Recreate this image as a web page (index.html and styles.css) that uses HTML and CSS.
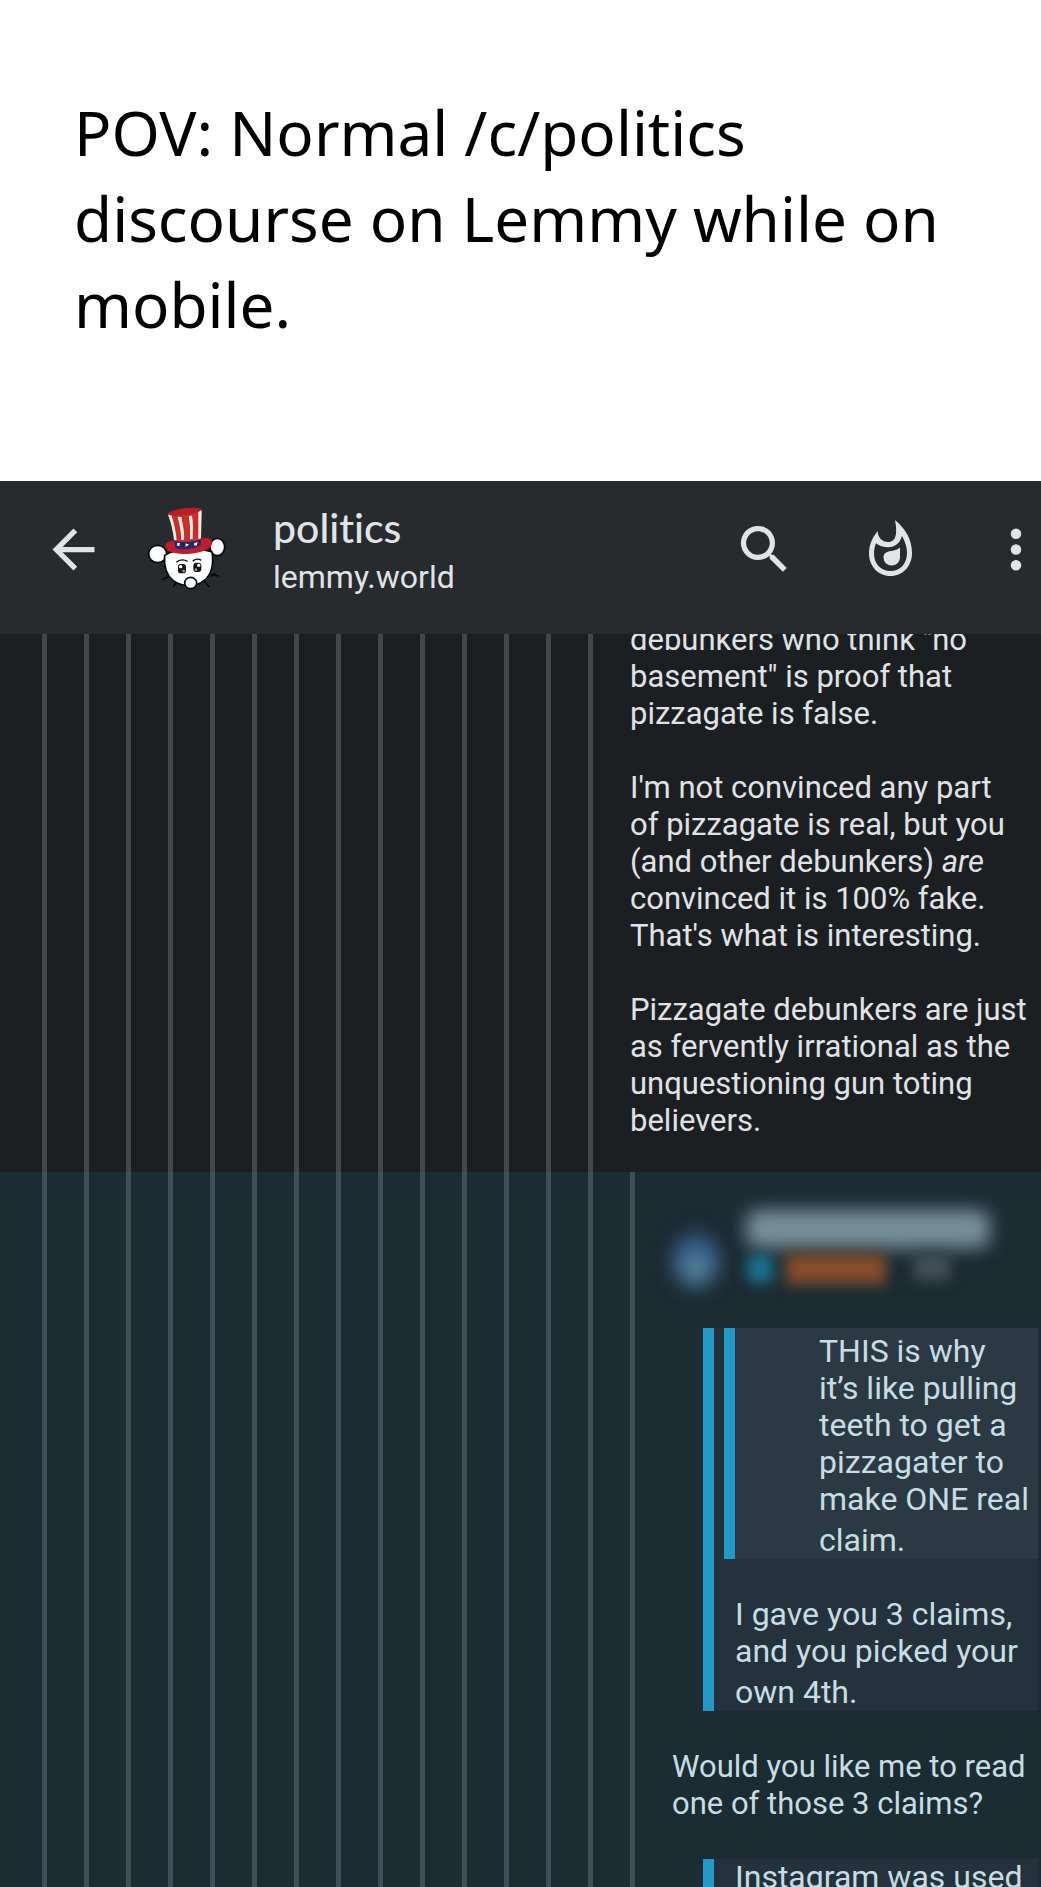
FILE: index.html
```html
<!DOCTYPE html>
<html lang="en">

<head>
	<meta charset="UTF-8">
	<meta name="viewport" content="width=device-width, initial-scale=1.0">
	<title>politics - lemmy.world</title>
	<link rel="stylesheet" href="styles.css">
</head>

<body>
	<!-- caption -->
	<h1 class="caption">POV: Normal /c/politics<br>discourse on Lemmy while on<br>mobile.</h1>

	<!-- app bar -->
	<header class="bar">
		<button class="icon-btn" type="button" aria-label="Back">
			<svg class="icon" viewBox="0 0 24 24"><path d="M20 11H7.83l5.59-5.59L12 4l-8 8 8 8 1.41-1.41L7.83 13H20z"/></svg>
		</button>
		<svg class="avatar" viewBox="0 20 285 285" aria-hidden="true">
			<!-- whiskers -->
			<path d="M88 243l-22 10M110 260l-10 15M192 255l15 20M208 236l30 6M214 244l10-10" fill="none" stroke="#08090a" stroke-width="5"/>
			<!-- ears -->
			<ellipse cx="53" cy="176" rx="27" ry="26" fill="#fff" stroke="#08090a" stroke-width="5"/>
			<ellipse cx="232" cy="155" rx="22" ry="26" fill="#fff" stroke="#08090a" stroke-width="5"/>
			<!-- head -->
			<path d="M74 180c-3 34 4 58 26 76 26 20 68 20 92 0 22-18 30-48 24-86-40-14-104-14-142 10z" fill="#fff" stroke="#08090a" stroke-width="5"/>
			<!-- hat -->
			<path d="M76 151c2-12 18-16 34-15l72-5c18-6 34-2 34 12 0 18-34 31-72 33-36 1-68-7-68-25z" fill="#c01c2c"/>
			<path d="M84 55c10-11 84-24 100-12l-2 92c-22 10-58 12-78 4-2-30-10-58-20-84z" fill="#c5302c"/>
			<path d="M84 58l9-3c8 26 15 50 17 80l-8-1c-3-28-8-50-18-76zM113 64l11 1c4 24 10 42 8 68l-8 1c0-24-5-46-11-70zM146 62l10-1c4 22 3 46 2 70l-8 1c1-24 1-46-4-70zM175 48l10-3-2 84-8 3z" fill="#fbeee0"/>
			<path d="M84 54c14-12 84-24 100-11-10 14-76 22-98 15z" fill="#b81f27"/>
			<path d="M103 136c22 7 58 5 80-5l-1 19c-18 12-58 16-76 9z" fill="#22286b"/>
			<path d="M112 142l8 2-2 8-7-1zM137 144l10 4-10 6zM163 143l10-2-3 10-8-1z" fill="#fff"/>
			<!-- face -->
			<path d="M109 201c8-8 22-9 34-3M158 198c8-7 18-8 26-3" fill="none" stroke="#08090a" stroke-width="4"/>
			<rect x="114" y="206" width="24" height="28" rx="8" fill="#15171a"/>
			<rect x="160" y="202" width="24" height="28" rx="9" fill="#15171a"/>
			<circle cx="122" cy="214" r="5" fill="#fff"/>
			<circle cx="131" cy="227" r="4" fill="#999"/>
			<circle cx="176" cy="210" r="5" fill="#fff"/>
			<circle cx="168" cy="223" r="4" fill="#999"/>
			<ellipse cx="152" cy="263" rx="18" ry="17" fill="#fff" stroke="#08090a" stroke-width="5"/>
		</svg>
		<div class="titles">
			<div class="community">politics</div>
			<div class="instance">lemmy.world</div>
		</div>
		<div class="actions">
			<button class="icon-btn" type="button" aria-label="Search">
				<svg class="icon" viewBox="0 0 24 24"><path d="M15.5 14h-.79l-.28-.27A6.47 6.47 0 0 0 16 9.5 6.5 6.5 0 1 0 9.5 16c1.61 0 3.09-.59 4.23-1.57l.27.28v.79l5 4.99L20.49 19zM9.5 14C7.01 14 5 11.99 5 9.5S7.01 5 9.5 5 14 7.01 14 9.5 11.99 14 9.5 14z"/></svg>
			</button>
			<button class="icon-btn" type="button" aria-label="Sort by hot">
				<svg class="icon" viewBox="0 0 63 63">
					<path fill-rule="evenodd" d="M36 2C47 11 53 22 53 35c0 13-9 23-21.500 23S10 48 10 35.500C10 27 13 20 18.700 13c0 6 4 11 10.600 11C36 24 39 18 36 2zM43 18c-2 7-7 11.300-13.700 11.300-5 0-9-1.300-12.300-4-1.300 3-2 7-2 10.200C15 46 22 53 31.500 53S48 46 48 35c0-6-2-12-5-17z"/>
					<path d="M41 29.500V39c0 5-4 8.500-8.500 8.500a8 8 0 0 1-8-8c0-4 3-6 7.500-6.500 4-.5 7-1.500 9-3.500z"/>
				</svg>
			</button>
			<button class="icon-btn" type="button" aria-label="More options">
				<svg class="icon icon-more" viewBox="4 0 16 24"><circle cx="12" cy="6" r="2"/><circle cx="12" cy="12" r="2"/><circle cx="12" cy="18" r="2"/></svg>
			</button>
		</div>
	</header>

	<!-- comments -->
	<main class="thread">
		<article class="comment comment-parent">
			<div class="rails"></div>
			<div class="text">
				<p>debunkers who think "no<br>basement" is proof that<br>pizzagate is false.</p>
				<p>I'm not convinced any part<br>of pizzagate is real, but you<br>(and other debunkers) <em>are</em><br>convinced it is 100% fake.<br>That's what is interesting.</p>
				<p>Pizzagate debunkers are just<br>as fervently irrational as the<br>unquestioning gun toting<br>believers.</p>
			</div>
		</article>

		<article class="comment comment-reply">
			<div class="rails rails-deep"></div>
			<div class="text">
				<!-- author is hidden -->
				<div class="author" aria-hidden="true">
					<div class="author-avatar"></div>
					<div class="author-info">
						<div class="author-name"></div>
						<div class="author-meta">
							<span class="badge"></span>
							<span class="handle"></span>
							<span class="time"></span>
						</div>
					</div>
				</div>
				<blockquote class="quote">
					<blockquote class="quote quote-inner">
						<p>THIS is why<br>it’s like pulling<br>teeth to get a<br>pizzagater to<br>make ONE real<span class="last-line">claim.</span></p>
					</blockquote>
					<p>I gave you 3 claims,<br>and you picked your<span class="last-line">own 4th.</span></p>
				</blockquote>
				<p>Would you like me to read<br>one of those 3 claims?</p>
				<blockquote class="quote">
					<p>Instagram was used</p>
				</blockquote>
			</div>
		</article>
	</main>
</body>

</html>
```
FILE: styles.css
```css
* {
	box-sizing: border-box;
	margin: 0;
	padding: 0;
}

body {
	display: flex;
	flex-direction: column;
	height: 100vh;
	overflow: hidden;
	background-color: #fff;
	font-family: Roboto, "Noto Sans", sans-serif;
	font-size: 32px;
	line-height: 37px;
}

/* caption */
.caption {
	padding: 89px 74px 134px;
	font-family: "Noto Sans", "Open Sans", sans-serif;
	font-size: 62px;
	font-weight: 400;
	line-height: 86px;
	color: #000;
}

/* app bar */
.bar {
	display: flex;
	align-items: center;
	flex-shrink: 0;
	padding: 21px 4px 37px 42px;
	background-color: #272b2e;
	color: #e0e3e7;
}

.icon-btn {
	display: flex;
	border: none;
	background: none;
	color: inherit;
	cursor: pointer;
}

.icon {
	width: 63px;
	height: 63px;
	fill: currentColor;
}

.icon-more {
	width: 42px;
}

.avatar {
	width: 95px;
	height: 95px;
	margin: 0 38px 0 35px;
}

.community {
	padding-bottom: 6px;
	font-family: Lato, Roboto, sans-serif;
	font-size: 41px;
	font-weight: 500;
	font-variant-ligatures: none;
	line-height: 50px;
}

.actions {
	display: flex;
	align-items: center;
	gap: 63px;
	margin-left: auto;
}

.actions .icon-more {
	margin-left: 10px;
}

/* comments */
.thread {
	display: flex;
	flex-direction: column;
	flex: 1;
	min-height: 0;
}

.comment {
	display: flex;
	overflow: hidden;
}

.comment-parent {
	--rail: #434649;
	flex-shrink: 0;
	background-color: #1b1f22;
	color: #e0e3e6;
}

.comment-reply {
	--rail: #3e4f58;
	flex: 1;
	background-color: #1c2c33;
	color: #c8dce6;
}

/* one 5px line for each level, every 42px */
.rails {
	flex: 0 0 588px;
	margin-left: 42px;
	background: repeating-linear-gradient(to right, var(--rail) 0 5px, transparent 5px 42px);
}

.rails-deep {
	flex-basis: 630px;
}

.text {
	flex: 1;
	min-width: 0;
	font-size: 31px;
}

.text p + p,
.text .quote + p,
.text p + .quote {
	margin-top: 37px;
}

/* the first line is scrolled under the bar */
.comment-parent .text {
	margin-top: -13px;
	padding-bottom: 33px;
}

.last-line {
	display: block;
	padding-top: 4px;
}

.quote {
	margin: 0 3px 0 31px;
	padding-left: 21px;
	border-left: 11px solid #2499c7;
	background-color: #24333b;
	font-size: 32px;
}

.quote-inner {
	margin: 0 0 0 -11px;
	padding: 5px 0 0 84px;
	background-color: #2b3a42;
}

/* blurred author */
.author {
	display: flex;
	align-items: flex-end;
	gap: 26px;
	height: 156px;
	padding-bottom: 40px;
}

.author-avatar {
	width: 48px;
	height: 56px;
	border-radius: 50%;
	background: radial-gradient(circle at 50% 65%, #60909d, #37618a 45%, #293d68);
	filter: blur(9px);
}

.author-name {
	width: 244px;
	height: 38px;
	margin-bottom: 6px;
	border-radius: 12px;
	background-color: #78909c;
	filter: blur(9px);
}

.author-meta {
	display: flex;
	gap: 12px;
	height: 34px;
	filter: blur(7px);
}

.badge {
	width: 28px;
	height: 30px;
	border-radius: 50%;
	background-color: #1b7395;
}

.handle {
	width: 100px;
	height: 30px;
	background-color: #864d2b;
}

.time {
	width: 36px;
	height: 26px;
	margin-left: 16px;
	background-color: #435057;
}
```
